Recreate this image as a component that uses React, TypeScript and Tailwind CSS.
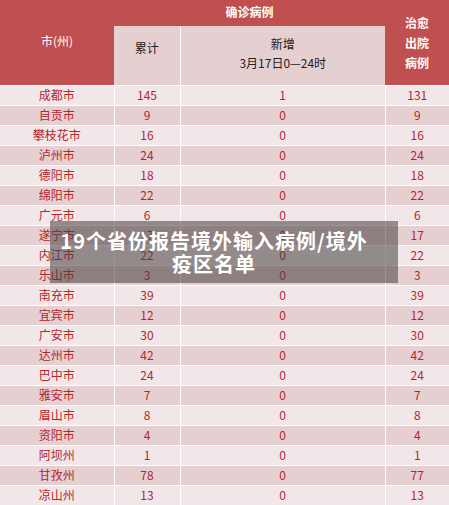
import React from "react";

const rows: [string, number, number, number][] = [
  ["成都市", 145, 1, 131],
  ["自贡市", 9, 0, 9],
  ["攀枝花市", 16, 0, 16],
  ["泸州市", 24, 0, 24],
  ["德阳市", 18, 0, 18],
  ["绵阳市", 22, 0, 22],
  ["广元市", 6, 0, 6],
  ["遂宁市", 17, 0, 17],
  ["内江市", 22, 0, 22],
  ["乐山市", 3, 0, 3],
  ["南充市", 39, 0, 39],
  ["宜宾市", 12, 0, 12],
  ["广安市", 30, 0, 30],
  ["达州市", 42, 0, 42],
  ["巴中市", 24, 0, 24],
  ["雅安市", 7, 0, 7],
  ["眉山市", 8, 0, 8],
  ["资阳市", 4, 0, 4],
  ["阿坝州", 1, 0, 1],
  ["甘孜州", 78, 0, 77],
  ["凉山州", 13, 0, 13],
];

const App = () => {
  return (
    <div
      className="relative w-[449px] h-[505px] overflow-hidden bg-[#f2e7e8]"
      style={{ fontFamily: '"Microsoft YaHei", "Noto Sans CJK SC", sans-serif' }}
    >
      <table className="w-[449px] table-fixed border-collapse text-[12px]">
        <colgroup>
          <col className="w-[114px]" />
          <col className="w-[66px]" />
          <col className="w-[205px]" />
          <col className="w-[64px]" />
        </colgroup>
        <thead>
          <tr className="h-[26px]">
            <th
              rowSpan={2}
              className="bg-[#c0504f] text-white font-normal align-middle pb-[2px]"
            >
              市(州)
            </th>
            <th
              colSpan={2}
              className="bg-[#c0504f] text-white font-bold text-[12px] align-middle pb-[2px]"
            >
              确诊病例
            </th>
            <th
              rowSpan={2}
              className="bg-[#c0504f] text-white font-bold leading-[20px] align-middle pt-[12px] pb-[10px]"
            >
              治愈
              <br />
              出院
              <br />
              病例
            </th>
          </tr>
          <tr className="h-[59px]">
            <th className="bg-[#e6cfd1] border-r border-white text-[#222] font-normal align-middle pb-[14px]">
              累计
            </th>
            <th className="bg-[#e6cfd1] text-[#222] font-normal leading-[19px] align-middle pb-[4px]">
              新增
              <br />
              3月17日0—24时
            </th>
          </tr>
        </thead>
        <tbody className="text-[#b3262e]">
          {rows.map((r, i) => (
            <tr
              key={i}
              className={`h-[20px] ${i % 2 === 0 ? "bg-[#f2e7e8]" : "bg-[#e6cfd1]"}`}
            >
              <td className="border border-white border-l-0 text-center leading-[18px] p-0">
                {r[0]}
              </td>
              <td className="border border-white text-center leading-[18px] p-0">
                {r[1]}
              </td>
              <td className="border border-white text-center leading-[18px] p-0">
                {r[2]}
              </td>
              <td className="border border-white border-r-0 text-center leading-[18px] p-0">
                {r[3]}
              </td>
            </tr>
          ))}
        </tbody>
      </table>

      <div className="absolute left-[50px] top-[221px] w-[348px] h-[62px] bg-[rgba(70,62,62,0.55)] flex items-center justify-center">
        <p className="text-white font-bold text-[20px] leading-[23px] tracking-[1px] text-center pr-[20px] whitespace-nowrap">
          19个省份报告境外输入病例/境外
          <br />
          疫区名单
        </p>
      </div>
    </div>
  );
};

export default App;
